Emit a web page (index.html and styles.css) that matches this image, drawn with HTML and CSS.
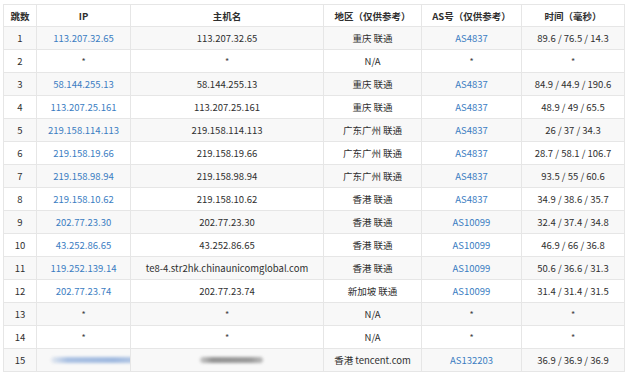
FILE: index.html
```html
<!DOCTYPE html>
<html lang="zh">
<head>
<meta charset="utf-8">
<link rel="stylesheet" href="styles.css">
</head>
<body>
<table class="trace">
  <colgroup>
    <col class="c-hop"><col class="c-ip"><col class="c-host"><col class="c-geo"><col class="c-as"><col class="c-time">
  </colgroup>
  <thead>
    <tr><th>跳数</th><th>IP</th><th>主机名</th><th>地区（仅供参考）</th><th>AS号（仅供参考）</th><th>时间（毫秒）</th></tr>
  </thead>
  <tbody>
    <tr><td>1</td><td class="link">113.207.32.65</td><td>113.207.32.65</td><td>重庆 联通</td><td class="link">AS4837</td><td>89.6 / 76.5 / 14.3</td></tr>
    <tr><td>2</td><td class="star">*</td><td class="star">*</td><td>N/A</td><td class="star">*</td><td class="star">*</td></tr>
    <tr><td>3</td><td class="link">58.144.255.13</td><td>58.144.255.13</td><td>重庆 联通</td><td class="link">AS4837</td><td>84.9 / 44.9 / 190.6</td></tr>
    <tr><td>4</td><td class="link">113.207.25.161</td><td>113.207.25.161</td><td>重庆 联通</td><td class="link">AS4837</td><td>48.9 / 49 / 65.5</td></tr>
    <tr><td>5</td><td class="link">219.158.114.113</td><td>219.158.114.113</td><td>广东广州 联通</td><td class="link">AS4837</td><td>26 / 37 / 34.3</td></tr>
    <tr><td>6</td><td class="link">219.158.19.66</td><td>219.158.19.66</td><td>广东广州 联通</td><td class="link">AS4837</td><td>28.7 / 58.1 / 106.7</td></tr>
    <tr><td>7</td><td class="link">219.158.98.94</td><td>219.158.98.94</td><td>广东广州 联通</td><td class="link">AS4837</td><td>93.5 / 55 / 60.6</td></tr>
    <tr><td>8</td><td class="link">219.158.10.62</td><td>219.158.10.62</td><td>香港 联通</td><td class="link">AS4837</td><td>34.9 / 38.6 / 35.7</td></tr>
    <tr><td>9</td><td class="link">202.77.23.30</td><td>202.77.23.30</td><td>香港 联通</td><td class="link">AS10099</td><td>32.4 / 37.4 / 34.8</td></tr>
    <tr><td>10</td><td class="link">43.252.86.65</td><td>43.252.86.65</td><td>香港 联通</td><td class="link">AS10099</td><td>46.9 / 66 / 36.8</td></tr>
    <tr><td>11</td><td class="link">119.252.139.14</td><td>te8-4.str2hk.chinaunicomglobal.com</td><td>香港 联通</td><td class="link">AS10099</td><td>50.6 / 36.6 / 31.3</td></tr>
    <tr><td>12</td><td class="link">202.77.23.74</td><td>202.77.23.74</td><td>新加坡 联通</td><td class="link">AS10099</td><td>31.4 / 31.4 / 31.5</td></tr>
    <tr><td>13</td><td class="star">*</td><td class="star">*</td><td>N/A</td><td class="star">*</td><td class="star">*</td></tr>
    <tr><td>14</td><td class="star">*</td><td class="star">*</td><td>N/A</td><td class="star">*</td><td class="star">*</td></tr>
    <tr><td>15</td><td class="blurcell"><span class="blur blur-ip"></span></td><td class="blurcell"><span class="blur blur-host"></span></td><td>香港 tencent.com</td><td class="link">AS132203</td><td>36.9 / 36.9 / 36.9</td></tr>
  </tbody>
</table>
</body>
</html>
```
FILE: styles.css
```css
html, body {
  margin: 0;
  padding: 0;
  background: #ffffff;
}
body {
  padding: 4px 0 0 3px;
  font-family: "Noto Sans CJK SC", "Noto Sans", sans-serif;
  font-size: 9.5px;
  color: #2f2f2f;
}
.trace {
  border-collapse: collapse;
  table-layout: fixed;
  width: 621px;
  border: 1px solid #e4e4e4;
}
.c-hop { width: 33px; }
.c-ip { width: 94px; }
.c-host { width: 193px; }
.c-geo { width: 98px; }
.c-as { width: 100px; }
.c-time { width: 103px; }
.trace th, .trace td {
  border: 1px solid #e6e6e6;
  text-align: center;
  padding: 0;
  white-space: nowrap;
  overflow: hidden;
}
.trace th {
  height: 21px;
  font-weight: bold;
  background: #ffffff;
}
.trace td {
  height: 22px;
}
.trace tbody tr:nth-child(odd) td {
  background: #f8f8f8;
}
.link {
  color: #3b7dc2;
}
.star {
  font-size: 9px;
  color: #444;
}
.blurcell {
  position: relative;
}
.blur {
  display: block;
  height: 6px;
  border-radius: 3px;
  filter: blur(1.5px);
}
.blur-ip {
  margin-left: 14px;
  width: 90px;
  background: linear-gradient(90deg, #e4e9f0, #a9c0e2 18%, #9fb9df 70%, #b9cbe6);
}
.blur-host {
  margin-left: 69px;
  width: 63px;
  background: linear-gradient(90deg, #c8c8c8, #939393 20%, #9a9a9a 80%, #bcbcbc);
}
```
